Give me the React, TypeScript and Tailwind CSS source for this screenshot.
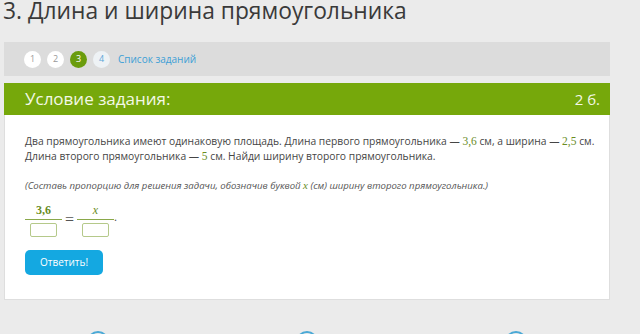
import React from 'react';

const sans = { fontFamily: '"Open Sans", "Noto Sans", sans-serif' };
const serif = { fontFamily: '"Liberation Serif", "DejaVu Serif", serif' };

function Num({ children }: { children: React.ReactNode }) {
  return (
    <span className="text-[#6a8d1f] text-[11.5px]" style={serif}>
      {children}
    </span>
  );
}

function Fraction({ top, italic }: { top: string; italic?: boolean }) {
  return (
    <div className="flex flex-col items-center w-[37px]">
      <span
        className={`text-[#6a8d1f] text-[12px] leading-[14px] ${italic ? 'italic' : 'font-bold'}`}
        style={serif}
      >
        {top}
      </span>
      <div className="w-full h-px bg-[#8aa84a] mt-[2px]" />
      <div className="w-[27px] h-[14px] mt-[3px] border border-[#b5c98a] rounded-[2px] bg-white" />
    </div>
  );
}

export default function App() {
  const pages = [
    { n: 1, cls: 'bg-white text-[#999]' },
    { n: 2, cls: 'bg-white text-[#999]' },
    { n: 3, cls: 'bg-[#6a9c0c] text-white' },
    { n: 4, cls: 'bg-[#eef2f5] text-[#5aa7d8]' },
  ];

  return (
    <div className="w-[640px] h-[334px] overflow-hidden bg-[#ebebeb]" style={sans}>
      <h1 className="text-[22.8px] leading-[21px] text-[#3a3a3a] pl-[3px]">
        3. Длина и ширина прямоугольника
      </h1>

      <div className="ml-[4px] w-[606px] mt-[21px]">
        <div className="h-[34px] bg-[#dcdcdc] flex items-center pl-[20px] gap-[6px]">
          {pages.map(p => (
            <div
              key={p.n}
              className={`w-[17px] h-[17px] rounded-full flex items-center justify-center text-[9px] ${p.cls}`}
            >
              {p.n}
            </div>
          ))}
          <a className="text-[10px] text-[#3d9fd6] ml-[2px]">Список заданий</a>
        </div>

        <div className="mt-[7px] h-[32px] bg-[#76a80b] flex items-center justify-between pl-[21px] pr-[10px] text-[#f3f8e6]">
          <span className="text-[17px]">Условие задания:</span>
          <span className="text-[15px]">2 б.</span>
        </div>

        <div className="bg-white border border-t-0 border-[#dedede] h-[185px] pl-[20px] pt-[19px]">
          <p className="text-[10.3px] leading-[15px] text-[#454545]">
            Два прямоугольника имеют одинаковую площадь. Длина первого прямоугольника — <Num>3,6</Num> см, а ширина — <Num>2,5</Num> см.
            <br />
            Длина второго прямоугольника — <Num>5</Num> см. Найди ширину второго прямоугольника.
          </p>
          <p className="text-[9.6px] leading-[15px] text-[#555] italic mt-[14px]">
            (Составь пропорцию для решения задачи, обозначив буквой{' '}
            <span className="text-[#6a8d1f] text-[11px]" style={serif}>x</span> (см) ширину второго прямоугольника.)
          </p>
          <div className="flex items-start mt-[10px]">
            <Fraction top="3,6" />
            <span className="text-[16px] text-[#555] mx-[3px] mt-[5px]" style={serif}>=</span>
            <Fraction top="x" italic />
            <span className="text-[12px] text-[#555] mt-[5px]" style={serif}>.</span>
          </div>
          <button className="mt-[13px] w-[78px] h-[25px] rounded-[5px] bg-[#14a8e1] text-white text-[10px]">
            Ответить!
          </button>
        </div>
      </div>

      <div className="flex pl-[87px] gap-[187px] mt-[31px]">
        {[0, 1, 2].map(i => (
          <div key={i} className="w-[22px] h-[22px] shrink-0 rounded-full border-2 border-[#4aa9d6]" />
        ))}
      </div>
    </div>
  );
}
